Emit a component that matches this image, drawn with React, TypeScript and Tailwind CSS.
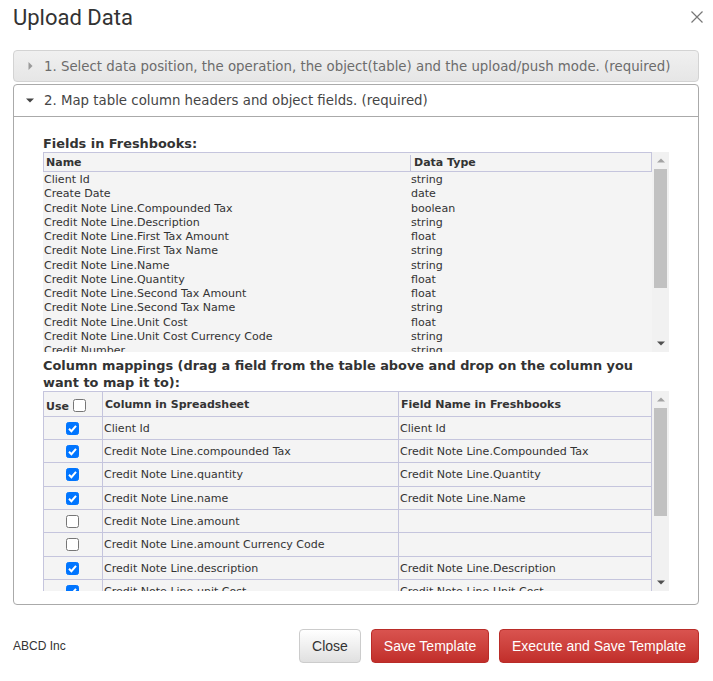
const fields: [string, string][] = [
  ["Client Id", "string"],
  ["Create Date", "date"],
  ["Credit Note Line.Compounded Tax", "boolean"],
  ["Credit Note Line.Description", "string"],
  ["Credit Note Line.First Tax Amount", "float"],
  ["Credit Note Line.First Tax Name", "string"],
  ["Credit Note Line.Name", "string"],
  ["Credit Note Line.Quantity", "float"],
  ["Credit Note Line.Second Tax Amount", "float"],
  ["Credit Note Line.Second Tax Name", "string"],
  ["Credit Note Line.Unit Cost", "float"],
  ["Credit Note Line.Unit Cost Currency Code", "string"],
  ["Credit Number", "string"],
];

const maps: [boolean, string, string, string][] = [
  [true, "Client Id", "Client Id", "h-[23px]"],
  [true, "Credit Note Line.compounded Tax", "Credit Note Line.Compounded Tax", "h-[23px]"],
  [true, "Credit Note Line.quantity", "Credit Note Line.Quantity", "h-[24px]"],
  [true, "Credit Note Line.name", "Credit Note Line.Name", "h-[23px]"],
  [false, "Credit Note Line.amount", "", "h-[23px]"],
  [false, "Credit Note Line.amount Currency Code", "", "h-[24px]"],
  [true, "Credit Note Line.description", "Credit Note Line.Description", "h-[23px]"],
  [true, "Credit Note Line.unit Cost", "Credit Note Line.Unit Cost", "h-[23px]"],
];

function Box({ checked }: { checked: boolean }) {
  return (
    <span
      className={
        "inline-flex h-[13px] w-[13px] items-center justify-center rounded-[2.5px] border " +
        (checked ? "border-[#0075ff] bg-[#0075ff]" : "border-[#767676] bg-white")
      }
    >
      {checked && (
        <svg width="11" height="11" viewBox="0 0 11 11" fill="none">
          <path d="M2 5.8 L4.4 8.2 L9 2.8" stroke="#fff" strokeWidth="2" />
        </svg>
      )}
    </span>
  );
}

function Scrollbar({ thumbTop, thumbHeight, downBottom }: { thumbTop: string; thumbHeight: string; downBottom: string }) {
  return (
    <div className="flex w-[17px] shrink-0 flex-col items-center bg-[#f1f1f1]">
      <div className={"flex w-full shrink-0 items-center justify-center " + thumbTop}>
        <svg width="8" height="5" viewBox="0 0 8 5"><path d="M4 0.5 L8 4.5 L0 4.5 Z" fill="#a3a3a3" /></svg>
      </div>
      <div className={"w-[13px] shrink-0 bg-[#c1c1c1] " + thumbHeight} />
      <div className="grow" />
      <div className={"flex w-full shrink-0 items-center justify-center " + downBottom}>
        <svg width="8" height="5" viewBox="0 0 8 5"><path d="M0 0.5 L8 0.5 L4 4.5 Z" fill="#505050" /></svg>
      </div>
    </div>
  );
}

export default function App() {
  return (
    <div className="h-[681px] w-[713px] overflow-hidden bg-white text-[#333]">
      <div className="flex h-[50px] items-start justify-between pl-[13px] pr-[10px]">
        <h1 className="mt-[3px] [font-family:Roboto,sans-serif] text-[22px] leading-[30px] font-normal text-[#333]">Upload Data</h1>
        <svg className="mt-[11px]" width="12" height="12" viewBox="0 0 12 12" fill="none">
          <path d="M0.5 0.5 L11.5 11.5 M11.5 0.5 L0.5 11.5" stroke="#777" strokeWidth="1.2" />
        </svg>
      </div>

      <div className="mx-[13px] w-[686px] font-[DejaVu_Sans,sans-serif]">
        <div className="flex h-[32px] items-center rounded-[4px] border border-[#d3d3d3] bg-linear-to-b from-[#f0f0f0] to-[#e6e6e6] text-[13.33px] text-[#6c6c6c]">
          <svg className="ml-[14px] mr-[11px]" width="5" height="8" viewBox="0 0 5 8"><path d="M0.5 0 L4.5 4 L0.5 8 Z" fill="#9a9a9a" /></svg>
          <span className="pt-[1px]">1. Select data position, the operation, the object(table) and the upload/push mode. (required)</span>
        </div>

        <div className="mt-[2px] h-[521px] rounded-[4px] border border-[#aaa] bg-white">
          <div className="flex h-[32px] items-center border-b border-[#aaa] text-[13.33px] text-[#454545]">
            <svg className="ml-[12px] mr-[10px]" width="8" height="5" viewBox="0 0 8 5"><path d="M0 0.5 L8 0.5 L4 4.5 Z" fill="#444" /></svg>
            <span>2. Map table column headers and object fields. (required)</span>
          </div>

          <div className="pl-[29px] pr-[29px]">
            <div className="mt-[18px] text-[12.9px] leading-[17px] font-bold text-[#333]">Fields in Freshbooks:</div>

            <div className="flex h-[200px] overflow-hidden">
              <div className="w-[609px] shrink-0 overflow-hidden bg-[#f4f4f4] text-[11.05px] text-[#333]">
                <div className="flex h-[20px] border border-[#c5c5dd] pt-[2px] text-[11px] font-bold">
                  <div className="flex w-[367px] shrink-0 items-center border-r border-[#c5c5dd] pl-[2px]">Name</div>
                  <div className="flex items-center pl-[3px]">Data Type</div>
                </div>
                <div className="pt-[1px]">
                  {fields.map(([n, t]) => (
                    <div key={n} className="flex h-[14.25px] items-center leading-[14px]">
                      <div className="w-[367px] shrink-0 pl-[1px] whitespace-nowrap">{n}</div>
                      <div className="pl-[1px]">{t}</div>
                    </div>
                  ))}
                </div>
              </div>
              <Scrollbar thumbTop="h-[17px]" thumbHeight="h-[119px]" downBottom="h-[17px]" />
            </div>

            <div className="mt-[5px] text-[12.9px] leading-[17px] font-bold text-[#333]">
              Column mappings (drag a field from the table above and drop on the column you want to map it to):
            </div>

            <div className="flex h-[200px] overflow-hidden">
              <div className="w-[609px] shrink-0 overflow-hidden bg-[#f4f4f4] text-[11.05px] text-[#333]">
                <div className="flex h-[26px] border border-[#c5c5dd] text-[11px] font-bold">
                  <div className="flex w-[59px] shrink-0 items-end gap-[4px] border-r border-[#c5c5dd] pb-[1px] pl-[2px]">
                    <span>Use</span>
                    <span className="mb-[3px] flex"><Box checked={false} /></span>
                  </div>
                  <div className="flex w-[296px] shrink-0 items-center border-r border-[#c5c5dd] pt-[2px] pl-[2px]">Column in Spreadsheet</div>
                  <div className="flex items-center pt-[2px] pl-[2px]">Field Name in Freshbooks</div>
                </div>
                {maps.map(([c, a, b, h]) => {
                  const pad = h === "h-[24px]" ? "pt-[1.5px]" : "pt-[2px]";
                  return (
                    <div key={a} className={"flex border-x border-b border-[#c5c5dd] " + h}>
                      <div className="flex w-[59px] shrink-0 items-center justify-center border-r border-[#c5c5dd] pr-[2px]"><Box checked={c} /></div>
                      <div className={"flex w-[296px] shrink-0 items-center border-r border-[#c5c5dd] pl-[1px] " + pad}>{a}</div>
                      <div className={"flex items-center pl-[1px] " + pad}>{b}</div>
                    </div>
                  );
                })}
              </div>
              <Scrollbar thumbTop="h-[17px]" thumbHeight="h-[108px]" downBottom="h-[17px]" />
            </div>
          </div>
        </div>
      </div>

      <div className="mx-[13px] mt-[24px] flex h-[34px] w-[686px] items-center justify-between font-[Liberation_Sans,sans-serif]">
        <span className="text-[12px] text-[#333]">ABCD Inc</span>
        <div className="flex gap-[10px] text-[14px]">
          <button className="h-[34px] w-[62px] rounded-[4px] border border-[#ccc] bg-linear-to-b from-white to-[#e0e0e0] text-[#333]">Close</button>
          <button className="h-[34px] w-[118px] rounded-[4px] border border-[#b92c28] bg-linear-to-b from-[#d9534f] to-[#c12e2a] text-white">Save Template</button>
          <button className="h-[34px] w-[200px] rounded-[4px] border border-[#b92c28] bg-linear-to-b from-[#d9534f] to-[#c12e2a] text-white">Execute and Save Template</button>
        </div>
      </div>
    </div>
  );
}
